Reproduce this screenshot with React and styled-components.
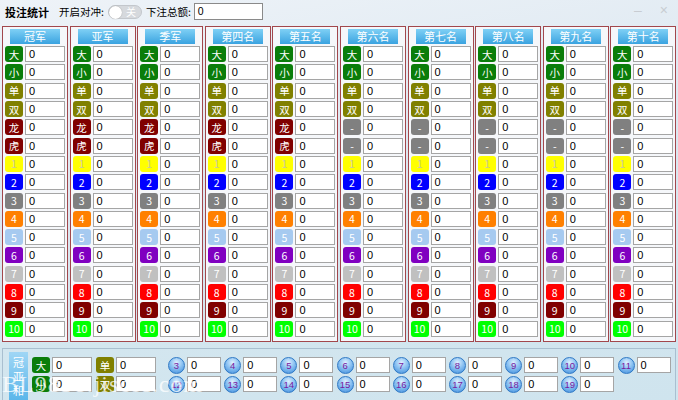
import React from "react";
import styled, { createGlobalStyle } from "styled-components";

const G = createGlobalStyle`
  html,body{margin:0;padding:0;}
  body{width:678px;height:400px;overflow:hidden;font-family:"Noto Sans CJK SC","Liberation Sans",sans-serif;font-size:11px;}
`;
const Page = styled.div`
  width:678px;height:400px;position:relative;overflow:hidden;box-sizing:border-box;
  background:linear-gradient(170deg,#eef3f8 0%,#dde8f1 40%,#d3e6ef 70%,#cfe4ee 100%);
  display:flex;flex-direction:column;
`;
const Top = styled.div`
  height:24px;display:flex;align-items:center;padding-left:5px;gap:4px;color:#000;font-size:10.5px;
`;
const Title = styled.span`font-weight:bold;font-size:11px;margin-right:6px;`;
const Toggle = styled.span`
  width:34px;height:14px;border-radius:8px;background:#d6d9dd;border:1px solid #c3c7cc;
  position:relative;display:inline-flex;align-items:center;justify-content:flex-end;padding-right:5px;box-sizing:border-box;color:#fff;font-size:10px;
  &::before{content:"";position:absolute;left:0;top:0;width:13px;height:13px;border-radius:50%;background:#fff;box-shadow:0 0 1px #888;}
`;
const TopInput = styled.div`
  width:64px;height:15px;border:1px solid #8a8a8a;background:#fff;font-family:"Liberation Sans",sans-serif;padding-left:3px;line-height:15px;margin-left:-1px;
`;
const WinCtl = styled.div`
  position:absolute;top:2px;right:10px;display:flex;gap:18px;color:#c8ccd2;font-size:14px;font-family:"Liberation Sans",sans-serif;
`;
const Grid = styled.div`
  display:grid;grid-template-columns:repeat(10,66px);column-gap:1.6px;padding:3px 2px 0 2px;
`;
const Col = styled.div`
  border:1px solid #a2474c;background:#f5f7fa;height:316px;box-sizing:border-box;
  display:flex;flex-direction:column;align-items:stretch;padding:2px 2px 0 2px;
`;
const Head = styled.div`
  align-self:center;width:50px;height:15px;margin-bottom:1px;
  background:linear-gradient(#7fd0f5,#3aa3e0);color:#fff;text-align:center;line-height:15px;font-size:11px;
`;
const Row = styled.div`display:flex;align-items:center;height:18.3px;gap:2px;`;
const Badge = styled.span`
  width:18px;height:16px;border-radius:3px;background:${p=>p.c};color:${p=>p.t||"#fff"};
  display:flex;align-items:center;justify-content:center;font-size:10.5px;font-family:"Noto Sans CJK SC","Liberation Sans",sans-serif;
`;
const Inp = styled.div`
  height:16px;border:1px solid #a5a5a5;background:#fff;box-sizing:border-box;padding-left:3px;line-height:14px;
  font-family:"Liberation Sans",sans-serif;font-size:11px;width:${p=>p.w?p.w+"px":"auto"};flex:${p=>p.w?"none":1};
`;
const Bottom = styled.div`
  margin:6px 2px 0 2px;height:52px;border:1px solid #a9bfd0;border-bottom:none;box-sizing:border-box;
  display:flex;align-items:flex-start;padding:3px 0 0 6px;gap:4px;
`;
const Label = styled.div`
  width:19px;height:48px;background:linear-gradient(#9fd6f5,#5bb6ea);color:#fff;display:flex;flex-direction:column;align-items:center;justify-content:center;font-size:11px;line-height:14px;
`;
const Pair = styled.div`display:grid;grid-template-rows:18px 18px;row-gap:1px;margin-top:4px;`;
const PRow = styled.div`display:flex;align-items:center;gap:2px;`;
const Balls = styled.div`display:grid;grid-template-columns:repeat(9,56.2px);grid-template-rows:18px 18px;row-gap:1px;margin-top:4px;margin-left:8px;`;
const Ball = styled.span`
  width:17px;height:17px;border-radius:50%;box-sizing:border-box;border:1px solid #2f78c4;
  background:radial-gradient(circle at 50% 30%,#dff0ff 0%,#8dc3f2 45%,#3c8bdc 100%);
  color:#7a1aa0;font-size:9.5px;display:flex;align-items:center;justify-content:center;font-family:"Liberation Sans",sans-serif;
`;
const Water = styled.div`
  position:absolute;left:2px;top:371px;font-family:"Liberation Serif",serif;font-size:24px;color:rgba(255,255,255,0.75);letter-spacing:1px;pointer-events:none;
`;

const heads=["冠军","亚军","季军","第四名","第五名","第六名","第七名","第八名","第九名","第十名"];
const base=[["大","#0a7d0a"],["小","#0a7d0a"],["单","#808000"],["双","#808000"]];
const nums=[["1","#ffff00","#c8c8a0"],["2","#0000ff"],["3","#808080"],["4","#ff8000"],["5","#a6caf0"],["6","#8000c0"],["7","#c0c0c0"],["8","#ff0000"],["9","#800000"],["10","#00ff00"]];

export default function App(){
  return <Page><G/>
    <Top><Title>投注统计</Title><span>开启对冲:</span><Toggle>关</Toggle><span>下注总额:</span><TopInput>0</TopInput></Top>
    <WinCtl><span>–</span><span>×</span></WinCtl>
    <Grid>{heads.map((h,i)=>{
      const dt=i<5?[["龙","#800000"],["虎","#800000"]]:[["-","#808080"],["-","#808080"]];
      const rows=[...base,...dt,...nums];
      return <Col key={i}><Head>{h}</Head>{rows.map((r,j)=><Row key={j}><Badge c={r[1]} t={r[2]}>{r[0]}</Badge><Inp>0</Inp></Row>)}</Col>;
    })}</Grid>
    <Bottom>
      <Label><span>冠</span><span>亚</span><span>和</span></Label>
      <Pair><PRow><Badge c="#0a7d0a">大</Badge><Inp w={40}>0</Inp></PRow><PRow><Badge c="#0a7d0a">小</Badge><Inp w={40}>0</Inp></PRow></Pair>
      <Pair><PRow><Badge c="#808000">单</Badge><Inp w={40}>0</Inp></PRow><PRow><Badge c="#808000">双</Badge><Inp w={40}>0</Inp></PRow></Pair>
      <Balls>{[3,4,5,6,7,8,9,10,11,12,13,14,15,16,17,18,19].map(n=><PRow key={n}><Ball>{n}</Ball><Inp w={34}>0</Inp></PRow>)}</Balls>
    </Bottom>
    <Water>BL9838.jisoic.com</Water>
  </Page>;
}
